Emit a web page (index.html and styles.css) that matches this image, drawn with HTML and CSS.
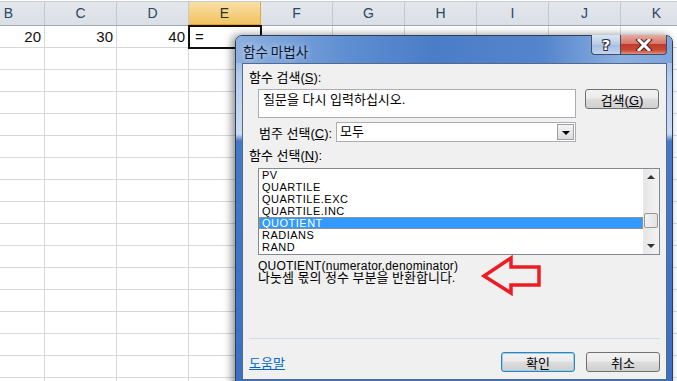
FILE: index.html
```html
<!DOCTYPE html>
<html>
<head>
  <title>함수 마법사</title>
  <link rel="stylesheet" href="styles.css">
</head>
<body>

<!-- Worksheet -->
<div class="sheet">
  <div class="row head">
    <div class="col">B</div>
    <div class="col">C</div>
    <div class="col">D</div>
    <div class="col active">E</div>
    <div class="col">F</div>
    <div class="col">G</div>
    <div class="col">H</div>
    <div class="col">I</div>
    <div class="col">J</div>
    <div class="col">K</div>
  </div>
  <div class="row">
    <div class="cell num">20</div>
    <div class="cell num">30</div>
    <div class="cell num">40</div>
    <div class="cell current">=</div>
    <div class="cell"></div>
    <div class="cell"></div>
    <div class="cell"></div>
    <div class="cell"></div>
    <div class="cell"></div>
    <div class="cell"></div>
  </div>
  <div class="blank"></div>
</div>

<!-- Insert function dialog -->
<div class="dialog">
  <div class="titlebar">
    <span class="title">함수 마법사</span>
    <div class="caption-btns">
      <span class="cap help">?</span>
      <span class="cap close">
        <svg width="18" height="12" viewBox="0 0 18 12">
          <path d="M4 1 L14 11 M14 1 L4 11" stroke="#4a2420" stroke-width="5" stroke-linecap="square"/>
          <path d="M4 1 L14 11 M14 1 L4 11" stroke="#fff" stroke-width="3" stroke-linecap="square"/>
        </svg>
      </span>
    </div>
  </div>

  <div class="panel">
    <div class="label">함수 검색(<u>S</u>):</div>
    <div class="search-row">
      <div class="textbox">질문을 다시 입력하십시오.</div>
      <button class="btn">검색(<u>G</u>)</button>
    </div>

    <div class="cat-row">
      <span class="cat-label">범주 선택(<u>C</u>):</span>
      <div class="select">
        <span class="select-text">모두</span>
        <span class="select-arrow"></span>
      </div>
    </div>

    <div class="label pick">함수 선택(<u>N</u>):</div>
    <div class="listbox">
      <div class="items">
        <div class="item">PV</div>
        <div class="item">QUARTILE</div>
        <div class="item">QUARTILE.EXC</div>
        <div class="item">QUARTILE.INC</div>
        <div class="item selected">QUOTIENT</div>
        <div class="item">RADIANS</div>
        <div class="item">RAND</div>
      </div>
      <div class="scrollbar">
        <div class="sb-btn up"></div>
        <div class="sb-track"><div class="sb-thumb"></div></div>
        <div class="sb-btn down"></div>
      </div>
    </div>

    <div class="desc">
      <div class="syntax">QUOTIENT(numerator,denominator)</div>
      <div class="summary">나눗셈 몫의 정수 부분을 반환합니다.</div>
    </div>

    <!-- annotation arrow -->
    <svg class="arrow" width="64" height="44" viewBox="0 0 64 44">
      <polygon points="4,22 31,4 31,13 59,13 59,31 31,31 31,39" fill="none" stroke="#ed1c24" stroke-width="3.5" stroke-linejoin="miter"/>
    </svg>

    <div class="sep"></div>

    <div class="footer">
      <a class="help-link" href="#">도움말</a>
      <button class="btn default">확인</button>
      <button class="btn">취소</button>
    </div>
  </div>
</div>

</body>
</html>
```

FILE: styles.css
```css
html, body {
  margin: 0;
  overflow: hidden;
  height: 100%;
  background: #fff;
}

body {
  position: relative;
  font-family: "Liberation Sans", "Noto Sans CJK KR", sans-serif;
}

/* Worksheet */
.sheet {
  margin-left: -27px;
  width: 720px;
}

.row {
  display: flex;
}

.head {
  height: 25px;
  box-sizing: border-box;
  border-top: 1px solid #c6ccd4;
  margin-top: 1px;
  background: linear-gradient(#e4e8ed, #dadfe6);
  border-bottom: 1px solid #9fa9b6;
}

.col {
  width: 72px;
  box-sizing: border-box;
  border-right: 1px solid #c2c8d0;
  text-align: center;
  font-size: 14px;
  line-height: 23px;
  color: #2b4565;
}

.col.active {
  background: linear-gradient(#f9dfa6, #f1c25e);
  border-right-color: #e0a44c;
  color: #30302a;
  box-shadow: inset 0 -1px 0 #f29b30;
}

.cell {
  width: 72px;
  height: 22px;
  box-sizing: border-box;
  border-right: 1px solid #d8d8d8;
  border-bottom: 1px solid #d8d8d8;
  font-size: 15px;
  line-height: 21px;
  color: #111;
}

.num {
  text-align: right;
  padding-right: 3px;
}

.current {
  outline: 2px solid #111;
  outline-offset: -1px;
  padding-left: 6px;
  position: relative;
}

.blank {
  height: 360px;
  background:
    repeating-linear-gradient(to bottom, transparent 0 21px, #d8d8d8 21px 22px),
    repeating-linear-gradient(to right, transparent 0 71px, #d8d8d8 71px 72px);
}

/* Dialog */
.dialog {
  position: absolute;
  left: 235px;
  top: 35px;
  width: 438px;
  height: 352px;
  box-sizing: border-box;
  border: 1px solid #2c3e58;
  border-radius: 7px 7px 0 0;
  padding: 0 5px 0 6px;
  background: linear-gradient(to bottom, #7fa6dc 0, #b7cdee 12%, #cbdcf2 28%, #4678c9 30%, #3c6fc3 100%);
  box-shadow: -3px 0 8px rgba(0, 0, 0, 0.45);
}

.titlebar {
  display: flex;
  height: 27px;
  margin: 0 -5px 0 -6px;
  padding: 0 5px 0 7px;
  border-radius: 6px 6px 0 0;
  background: linear-gradient(to right, #8eb0e0, #5f8fd2 25%, #4b7dc7 45%, #5484cb 70%, #8aaee0 88%, #7ea4da);
}

.title {
  font-family: "Noto Sans CJK KR", sans-serif;
  font-size: 13.5px;
  line-height: 14px;
  padding-top: 8px;
  color: #0c1a2c;
  text-shadow: 0 0 6px rgba(255, 255, 255, 0.8);
}

.caption-btns {
  display: flex;
  margin-left: auto;
  margin-top: -1px;
  height: 20px;
}

.cap {
  display: flex;
  align-items: center;
  justify-content: center;
  height: 20px;
  box-sizing: border-box;
  border: 1px solid #3c4f68;
  border-top: none;
}

.help {
  width: 29px;
  border-radius: 0 0 0 4px;
  border-right: none;
  background: linear-gradient(#dbe6f4, #b7cbe6 50%, #a3bcdf 51%, #c3d5ee);
  font: bold 14px "DejaVu Sans", sans-serif;
  color: #fff;
  text-shadow: 1px 1px 0 #334, -1px -1px 0 #334, 1px -1px 0 #334, -1px 1px 0 #334;
}

.close {
  width: 47px;
  border-radius: 0 0 4px 0;
  background: linear-gradient(#e9a99f, #d6776a 45%, #c1392a 50%, #c94a38 80%, #e2907f);
}

.panel {
  position: relative;
  height: 317px;
  box-sizing: border-box;
  border: 1px solid #546a8a;
  background: #f0f0f0;
  padding: 7px 6px 0 6px;
  font-size: 13px;
  color: #000;
}

.label {
  line-height: 14px;
}

.search-row {
  display: flex;
  align-items: flex-start;
  margin-top: 4px;
  margin-left: 9px;
  gap: 9px;
}

.textbox {
  width: 318px;
  height: 29px;
  box-sizing: border-box;
  border: 1px solid #abadb3;
  background: #fff;
  padding: 3px 4px;
  line-height: 13px;
}

.btn {
  width: 74px;
  height: 20px;
  padding: 0;
  border: 1px solid #707070;
  border-radius: 3px;
  background: linear-gradient(#f2f2f2, #ebebeb 45%, #dddddd 50%, #cfcfcf);
  font-family: "Liberation Sans", "Noto Sans CJK KR", sans-serif;
  font-size: 13px;
  color: #000;
}

.btn.default {
  border-color: #3c7fb1;
  box-shadow: inset 0 0 0 1px #8fd3f3;
}

.cat-row {
  display: flex;
  align-items: center;
  margin-top: 4px;
  margin-left: 10px;
}

.cat-label {
  width: 77px;
}

.select {
  display: flex;
  width: 240px;
  height: 20px;
  box-sizing: border-box;
  border: 1px solid #abadb3;
  background: #fff;
}

.select-text {
  flex: 1;
  line-height: 18px;
  padding-left: 3px;
}

.select-arrow {
  width: 17px;
  margin: 1px;
  box-sizing: border-box;
  border: 1px solid #a0a0a0;
  background: linear-gradient(#f4f4f4, #dcdcdc);
  position: relative;
}

.select-arrow::after {
  content: "";
  position: absolute;
  left: 4px;
  top: 6px;
  border-left: 4px solid transparent;
  border-right: 4px solid transparent;
  border-top: 4px solid #000;
}

.pick {
  margin-top: 7px;
}

.listbox {
  display: flex;
  margin-top: 5px;
  margin-left: 9px;
  width: 402px;
  height: 87px;
  box-sizing: border-box;
  border: 1px solid #828790;
  background: #fff;
}

.items {
  flex: 1;
  overflow: hidden;
}

.item {
  height: 12px;
  line-height: 12px;
  padding-left: 3px;
  font-size: 11px;
  letter-spacing: 0.5px;
}

.item.selected {
  background: #3399ff;
  color: #fff;
  outline: 1px dotted #d88c3a;
  outline-offset: -1px;
}

.scrollbar {
  width: 16px;
  display: flex;
  flex-direction: column;
  background: linear-gradient(to right, #e6e6e6, #f3f3f3);
}

.sb-btn {
  height: 17px;
  position: relative;
}

.sb-btn::after {
  content: "";
  position: absolute;
  left: 4px;
  border-left: 4px solid transparent;
  border-right: 4px solid transparent;
}

.sb-btn.up::after {
  top: 6px;
  border-bottom: 4px solid #333;
}

.sb-btn.down::after {
  top: 7px;
  border-top: 4px solid #333;
}

.sb-track {
  flex: 1;
}

.sb-thumb {
  margin-top: 27px;
  height: 15px;
  margin-left: 1px;
  margin-right: 1px;
  box-sizing: border-box;
  border: 1px solid #979797;
  border-radius: 2px;
  background: linear-gradient(to right, #f3f3f3, #e2e2e2);
}

.desc {
  margin-top: 5px;
  margin-left: 9px;
  line-height: 12px;
}

.syntax {
  font-size: 12px;
  letter-spacing: 0.2px;
}

.arrow {
  position: absolute;
  left: 237px;
  top: 190px;
}

.sep {
  margin-top: 54px;
  height: 1px;
  background: #d3dce4;
}

.footer {
  display: flex;
  align-items: center;
  margin-top: 12px;
  gap: 11px;
}

.help-link {
  margin-right: auto;
  color: #0066cc;
  font-family: "Noto Sans CJK KR", sans-serif;
  font-size: 13px;
  margin-top: 2px;
}
```
